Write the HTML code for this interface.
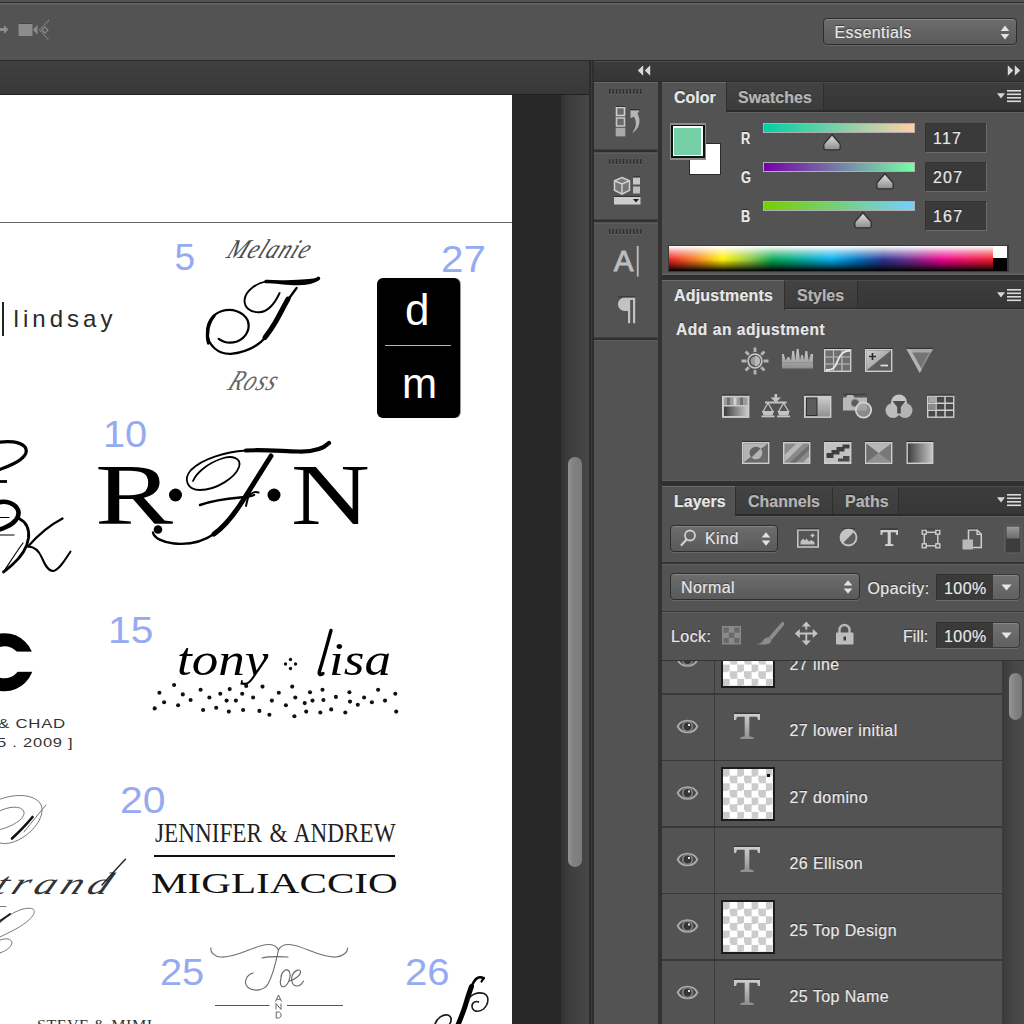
<!DOCTYPE html>
<html>
<head>
<meta charset="utf-8">
<title>Photoshop</title>
<style>
html,body{margin:0;padding:0;}
body{width:1024px;height:1024px;overflow:hidden;position:relative;background:#535353;font-family:"Liberation Sans",sans-serif;}
.a{position:absolute;}
.t{position:absolute;white-space:nowrap;line-height:1;font-size:16px;color:#e6e6e6;text-shadow:0 0 1px rgba(230,230,230,.55),0 -1px 1px rgba(0,0,0,.55);}
.t{letter-spacing:.42px;}
.tb{font-weight:bold;letter-spacing:0;}
.dim{color:#b4b4b4;text-shadow:0 0 1px rgba(180,180,180,.5),0 -1px 1px rgba(0,0,0,.5);}
.num{position:absolute;white-space:nowrap;line-height:1;color:#95aaf1;font-size:37px;}
.blk{position:absolute;white-space:nowrap;line-height:1;color:#000;}
svg{position:absolute;overflow:visible;}
</style>
</head>
<body>

<!-- ===== top options bar ===== -->
<div class="a" style="left:0;top:0;width:1024px;height:60px;background:#535353;"></div>
<div class="a" style="left:0;top:2px;width:1024px;height:1px;background:#2b2b2b;"></div>
<div class="a" style="left:0;top:3px;width:1024px;height:2px;background:#676767;"></div>
<div class="a" style="left:0;top:4px;width:1024px;height:1px;background:#5e5e5e;"></div>


<!-- options bar content -->
<svg style="left:0;top:18px" width="60" height="26" viewBox="0 18 60 26">
  <path d="M0 28 h4 v-3 l4.5 4.5 l-4.5 4.5 v-3 h-4z" fill="#8e8e8e"/>
  <rect x="18.5" y="23.5" width="14" height="12.5" fill="#8c8c8c"/>
  <rect x="18.5" y="23" width="14" height="1" fill="#444"/>
  <path d="M33 29.7 l4.5 -5 v10z" fill="#8c8c8c"/>
  <path d="M49 20 L39.5 30 L49 40" fill="none" stroke="#858585" stroke-width="1.4" stroke-dasharray="1.600 .900"/>
  <path d="M45 26.8 l3 3.2 l-3 3.2 l-3 -3.2z" fill="none" stroke="#8a8a8a" stroke-width="1.2"/>
</svg>
<div class="a" style="left:823px;top:18px;width:192px;height:25px;border:1px solid #2d2d2d;border-radius:4px;background:linear-gradient(#6d6d6d,#5a5a5a);box-shadow:0 1px 0 rgba(255,255,255,.12), inset 0 1px 0 rgba(255,255,255,.18);"></div>
<div class="t" style="left:834.500px;top:24.800px;">Essentials</div>
<svg style="left:1000px;top:25px" width="10" height="15" viewBox="0 0 10 15"><path d="M5 0.5 L9.3 6 H0.7z M5 14.5 L9.3 9 H0.7z" fill="#e2e2e2"/></svg>

<!-- ===== document tab strip ===== -->
<div class="a" style="left:0;top:60px;width:1024px;height:1px;background:#2a2a2a;"></div>
<div class="a" style="left:0;top:61px;width:590px;height:33px;background:linear-gradient(#404040,#383838);"></div>
<div class="a" style="left:0;top:94px;width:590px;height:1px;background:#222;"></div>

<!-- ===== canvas area ===== -->
<div class="a" style="left:0;top:95px;width:561px;height:929px;background:#282828;"></div>
<div class="a" id="doc" style="left:0;top:95px;width:512px;height:929px;background:#fff;overflow:hidden;"></div>

<!-- ===== document artwork (page coordinates) ===== -->
<div class="a" style="left:0;top:95px;width:512px;height:929px;overflow:hidden;">
<div class="a" style="left:0;top:-95px;width:512px;height:1024px;">
<div class="a" style="left:0;top:221.500px;width:512px;height:1.500px;background:#666;"></div>

<!-- numbers -->
<div class="num" id="n5" style="left:174.500px;top:239px;">5</div>
<div class="num" id="n27" style="left:441.300px;top:240.500px;transform:scaleX(1.090);transform-origin:0 0;">27</div>
<div class="num" id="n10" style="left:103.200px;top:415.500px;transform:scaleX(1.075);transform-origin:0 0;">10</div>
<div class="num" id="n15" style="left:107.800px;top:611.500px;transform:scaleX(1.100);transform-origin:0 0;">15</div>
<div class="num" id="n20" style="left:120px;top:781.500px;transform:scaleX(1.105);transform-origin:0 0;">20</div>
<div class="num" id="n25" style="left:160px;top:954px;transform:scaleX(1.075);transform-origin:0 0;">25</div>
<div class="num" id="n26" style="left:405px;top:953.500px;transform:scaleX(1.085);transform-origin:0 0;">26</div>

<!-- lindsay -->
<div class="a" style="left:1.800px;top:302px;width:2.600px;height:34px;background:#222;"></div>
<div class="blk" id="lindsay" style="left:13.500px;top:307px;font-size:24px;letter-spacing:4.050px;color:#2a2a2a;">lindsay</div>

<!-- Melanie / T / Ross -->
<div class="blk" id="melanie" style="left:222.500px;top:236px;font-family:'Liberation Serif',serif;font-style:italic;font-size:27px;color:#4c4c4c;transform:skewX(-24deg) scaleX(.860);transform-origin:0 100%;letter-spacing:1px;">Melanie</div>
<div class="blk" id="ross" style="left:223.500px;top:367px;font-family:'Liberation Serif',serif;font-style:italic;font-size:28.500px;color:#666;transform:skewX(-24deg) scaleX(.800);transform-origin:0 100%;letter-spacing:1.500px;">Ross</div>
<svg style="left:0;top:0" width="512" height="1024" viewBox="0 0 512 1024">
 <g fill="none" stroke="#000" stroke-linecap="round" stroke-linejoin="round">
  <!-- top bar -->
  <path d="M318.500 278.300 C312 283.500 300 284 290 283.300 C281 282.700 273 281.300 266 281.600" stroke-width="3.500"/>
  <path d="M318 279.300 C304 281.200 288 281.600 272 281.600" stroke-width="2.400"/>
  <path d="M267 281.400 C256 283 246 291 244.700 299 C243.500 307 250 312.500 259 312.300 C268 312 275 303 279.600 293" stroke-width="1.900"/>
  <!-- stem -->
  <path d="M296.600 288 C291 295 287 301 283 308.500 C278 318 273 327 266.500 336" stroke-width="2.400"/>
  <path d="M288 299 C284 306 280 314 275.500 322 C272 328 268.500 333 265 337.500" stroke-width="5"/>
  <path d="M266.500 336 C260 344.500 250 351.500 231 353.900 C218 354.500 208 345 207.100 333.400 C206.500 322 213 314 222 311 C232 308 243 311.500 247.500 320 C251 329 246 338 237 341.500 C230 343.800 223 342 218.700 338.800" stroke-width="2.200"/>
  <path d="M208.500 343 C206 334 208 323 214 316" stroke-width="3.300"/>
 </g>
</svg>

<!-- domino -->
<div class="a" style="left:377px;top:278px;width:83px;height:140px;border-radius:6px;background:#000;box-shadow:1px 0 0 #999;"></div>
<div class="a" style="left:385px;top:344.700px;width:66px;height:1px;background:#b4b4b4;"></div>
<div class="blk" id="dd" style="left:405px;top:287.500px;font-size:44px;color:#fff;">d</div>
<div class="blk" id="dm" style="left:402px;top:362.500px;font-size:42.500px;color:#fff;transform:scaleX(.990);transform-origin:0 0;">m</div>

<!-- R F N -->
<div class="blk" id="bigR" style="left:94.500px;top:451.500px;font-family:'Liberation Serif',serif;font-size:86px;transform:scaleX(1.360);transform-origin:0 0;">R</div>
<div class="blk" id="bigN" style="left:291px;top:451.500px;font-family:'Liberation Serif',serif;font-size:86px;transform:scaleX(1.270);transform-origin:0 0;">N</div>
<svg style="left:0;top:0" width="512" height="1024" viewBox="0 0 512 1024">
 <circle cx="175.500" cy="495" r="6.500" fill="#000"/><circle cx="274" cy="495" r="6.500" fill="#000"/>
 <g fill="none" stroke="#000" stroke-linecap="round" stroke-linejoin="round">
  <!-- F top bar -->
  <path d="M329 443 C322 450 312 452 298 451.500 C280 451 262 449.500 246 450.500" stroke-width="4.200"/>
  <path d="M246 450.500 C226 452 203 458 191 470 C183 479 187 490 200 490 C216 490 235 478 239 467 C242 458 232 455 222 458.500 C208 463 196 473 193 481" stroke-width="1.800"/>
  <!-- F stem -->
  <path d="M271 456 C262 470 251 488 240 505 C232 517 224 527 214 534" stroke-width="5"/>
  <path d="M214 534 C204 541 190 545 174 543.500 C163 542.500 154 538 153 532.500" stroke-width="2.400"/>
  <!-- crossbar -->
  <path d="M200 505 C213 500.500 228 498.500 240 497.500 C246 497 250 497 254 495" stroke-width="2.400"/>
  <path d="M250 491 C248.500 496 247 501 246 506 M248.500 496.500 C251 493 255 491 258.500 492.500" stroke-width="2"/>
 </g>
 <circle cx="158" cy="529.500" r="4.300" fill="#000"/>
</svg>

<!-- K script (left, cut off) -->
<svg style="left:0;top:0" width="512" height="1024" viewBox="0 0 512 1024">
 <g fill="none" stroke="#000" stroke-linecap="round" stroke-linejoin="round">
  <path d="M-2 442.500 C8 440.500 20 441.500 25 447 C29 453 23 459 14 463.500 C8 466.500 3 468.500 -2 470" stroke-width="3.200"/>
  <path d="M-2 481.500 H7" stroke-width="2.800" stroke-linecap="butt"/>
  <path d="M-2 502.500 C6 500.500 15 503 18 510 C20.500 517 14 523.500 6 527 C3 528.500 0 529.500 -2 530" stroke-width="4.600"/>
  <path d="M-2 517.500 H9 M-2 535 H14" stroke-width="1.200"/>
  <path d="M19 518.500 C26 522 29.500 529 28.500 538 C27 549 20 558 12 565 C8 568.500 5 571 3.500 572" stroke-width="2.800"/>
  <path d="M3.500 572 C10 562 17 551 23 543" stroke-width="1.200"/>
  <path d="M62.500 518.500 C50 525 38 535 28 546.500" stroke-width="2.300"/>
  <path d="M28 546.500 C35 546.500 39 551 42 558 C45 565 48 571 53 571 C59 570.500 65 560 70.500 551.500" stroke-width="2"/>
 </g>
</svg>

<!-- tony lisa -->
<div class="blk" id="tony" style="left:177px;top:635.500px;font-family:'Liberation Serif',serif;font-style:italic;font-size:47px;transform:scaleX(1.130);transform-origin:0 100%;">tony</div>
<div class="blk" id="lisa" style="left:328.500px;top:635.500px;font-family:'Liberation Serif',serif;font-style:italic;font-size:47px;transform:scaleX(1.130);transform-origin:0 100%;">isa</div>
<svg style="left:0;top:0" width="512" height="1024" viewBox="0 0 512 1024">
 <path d="M331 630.500 C327 645 323 660 319.500 671 C318.500 674.500 320 675.500 323 673.500" fill="none" stroke="#000" stroke-width="3.400" stroke-linecap="round"/>
 <g fill="#111"><circle cx="290.500" cy="659.500" r="1.700"/><circle cx="290.500" cy="668.500" r="1.700"/><circle cx="285.500" cy="664" r="1.700"/><circle cx="295.500" cy="664" r="1.700"/></g>
 <g fill="#111"><circle cx="159.4" cy="692.8" r="2.050"/><circle cx="174.1" cy="685.0" r="2.050"/><circle cx="164.1" cy="702.2" r="2.050"/><circle cx="154.7" cy="708.4" r="2.050"/><circle cx="182.8" cy="694.4" r="2.050"/><circle cx="178.1" cy="705.3" r="2.050"/><circle cx="190.6" cy="700.0" r="2.050"/><circle cx="200.6" cy="689.7" r="2.050"/><circle cx="209.4" cy="697.5" r="2.050"/><circle cx="203.1" cy="710.0" r="2.050"/><circle cx="216.2" cy="707.8" r="2.050"/><circle cx="220.3" cy="693.8" r="2.050"/><circle cx="226.6" cy="700.6" r="2.050"/><circle cx="229.7" cy="689.1" r="2.050"/><circle cx="235.9" cy="700.6" r="2.050"/><circle cx="228.8" cy="711.6" r="2.050"/><circle cx="242.2" cy="693.8" r="2.050"/><circle cx="243.1" cy="710.0" r="2.050"/><circle cx="246.2" cy="685.9" r="2.050"/><circle cx="253.1" cy="697.5" r="2.050"/><circle cx="259.4" cy="710.9" r="2.050"/><circle cx="262.5" cy="686.6" r="2.050"/><circle cx="269.4" cy="714.7" r="2.050"/><circle cx="271.9" cy="700.6" r="2.050"/><circle cx="278.8" cy="692.8" r="2.050"/><circle cx="285.9" cy="705.3" r="2.050"/><circle cx="292.2" cy="686.6" r="2.050"/><circle cx="295.3" cy="697.5" r="2.050"/><circle cx="294.4" cy="716.2" r="2.050"/><circle cx="304.7" cy="703.1" r="2.050"/><circle cx="306.2" cy="711.6" r="2.050"/><circle cx="310.0" cy="692.2" r="2.050"/><circle cx="312.5" cy="700.6" r="2.050"/><circle cx="320.3" cy="712.5" r="2.050"/><circle cx="322.5" cy="689.7" r="2.050"/><circle cx="323.4" cy="700.0" r="2.050"/><circle cx="331.2" cy="709.4" r="2.050"/><circle cx="335.9" cy="696.9" r="2.050"/><circle cx="345.3" cy="712.5" r="2.050"/><circle cx="349.4" cy="692.2" r="2.050"/><circle cx="350.0" cy="701.6" r="2.050"/><circle cx="357.8" cy="704.7" r="2.050"/><circle cx="364.1" cy="697.5" r="2.050"/><circle cx="371.9" cy="702.2" r="2.050"/><circle cx="378.1" cy="689.7" r="2.050"/><circle cx="385.0" cy="700.6" r="2.050"/><circle cx="395.3" cy="693.8" r="2.050"/><circle cx="396.2" cy="711.6" r="2.050"/></g>
</svg>

<!-- big C + CHAD -->
<svg style="left:0;top:0" width="512" height="1024" viewBox="0 0 512 1024">
 <ellipse cx="4.500" cy="662.300" rx="22.800" ry="22.500" fill="none" stroke="#000" stroke-width="13"/><rect x="12" y="651.600" width="26" height="20.200" fill="#fff"/>
</svg>
<div class="blk" id="chad" style="left:-2px;top:717px;font-size:13px;color:#333;letter-spacing:.600px;transform:scaleX(1.290);transform-origin:0 0;">&amp; CHAD</div>
<div class="blk" id="d2009" style="left:-3px;top:736px;font-size:13px;color:#333;letter-spacing:.600px;transform:scaleX(1.270);transform-origin:0 0;">5 . 2009 ]</div>

<!-- Jennifer & Andrew -->
<div class="blk" id="jen" style="left:154.500px;top:819.500px;font-family:'Liberation Serif',serif;font-size:27px;color:#222;word-spacing:2px;transform:scaleX(.859);transform-origin:0 0;">JENNIFER &amp; ANDREW</div>
<div class="a" style="left:154px;top:855.200px;width:240.500px;height:1.700px;background:#111;"></div>
<div class="blk" id="mig" style="left:151px;top:867.500px;font-family:'Liberation Serif',serif;font-size:29.800px;color:#111;transform:scaleX(1.380);transform-origin:0 0;">MIGLIACCIO</div>

<!-- left script D / trand / flourish -->
<div class="blk" id="trand" style="left:-10px;top:868px;font-family:'Liberation Serif',serif;font-style:italic;font-size:31px;color:#333;letter-spacing:4px;transform:skewX(-25deg) scaleX(1.370);transform-origin:0 100%;">trand</div>
<svg style="left:0;top:0" width="512" height="1024" viewBox="0 0 512 1024">
 <g fill="none" stroke="#777" stroke-width="1" stroke-linecap="round">
  <path d="M-2 800 C12 794 32 793 40 803 C46 812 38 828 22 838 C12 844 2 845 -2 842"/>
  <path d="M-2 812 C8 806 22 805 24 812 C25 819 12 827 -2 830"/>
  <path d="M46 805 C40 812 32 822 24 832"/>
  <path d="M-2 925 C10 912 26 906 33 909 C38 913 28 923 12 931 C6 934 2 936 -2 938"/>
  <path d="M-2 941 C6 937 12 939 12 943 C11 948 4 952 -2 953.500"/>
  <path d="M-2 906.500 H6"/>
 </g>
 <path d="M32.500 817 C26 825 19 832 12 838.500" fill="none" stroke="#111" stroke-width="2.600" stroke-linecap="round"/>
 <path d="M10 914 C6 917 3 919 0 921" fill="none" stroke="#222" stroke-width="2" stroke-linecap="round"/>
 <path d="M125.500 859.300 C118 867 110 876 102 885" fill="none" stroke="#222" stroke-width="1.400" stroke-linecap="round"/>
</svg>

<!-- Joe -->
<svg style="left:0;top:0" width="512" height="1024" viewBox="0 0 512 1024">
 <g fill="none" stroke="#7a6f6a" stroke-width="1.200" stroke-linecap="round">
  <path d="M211 948 C210 952 214 956.500 221 957 C238 958 254 945 268 944.500 C274 944.300 277 947 278.500 950 C280 947 283 944.300 289 944.500 C303 945 319 958 336 957 C343 956.500 348 952 347.500 948"/>
 </g>
 <g fill="none" stroke="#666" stroke-width="1.100" stroke-linecap="round">
  <path d="M262 958 C268 956.500 280 956.500 288 957"/>
  <path d="M278.500 950 C276 962 273 975 268 984 C264 990.500 254 992 248 987.500 C243 983 246 975 253 973"/>
  <path d="M281 978 C281 972 286 968 289 971 C291.500 975 289 984 284.500 986.500 C280.500 988 279.500 983 281 978"/>
  <path d="M289.500 981 C295 979.500 301 975 300.500 971.500 C300 968.500 294 970 292 976 C290.500 982 293 986.500 297.500 986 C300.500 985.500 302.500 983 303.500 981"/>
 </g>
 <path d="M215 1005.500 H269.500 M287 1005.500 H343" stroke="#555" stroke-width="1.100"/>
 <g fill="none" stroke="#555" stroke-width="0.900">
  <path d="M275.500 1001.500 L278.500 995 L281.500 1001.500 M276.700 999.300 H280.300"/>
  <path d="M276 1009.500 V1003.500 L281 1009.500 V1003.500"/>
  <path d="M276.200 1018 V1012 H278.500 C282 1012 282 1018 278.500 1018z"/>
 </g>
</svg>

<!-- script f bottom right -->
<svg style="left:0;top:0" width="512" height="1024" viewBox="0 0 512 1024">
 <g fill="none" stroke="#000" stroke-linecap="round" stroke-linejoin="round">
  <path d="M483.500 978.500 C481.500 976.800 478 976.800 475.500 979.500 C473 982.500 471.500 986 470 990" stroke-width="2.600"/>
  <path d="M471.500 986.500 C469 993 467 1000 464.500 1008 C462.500 1014 460 1020 457.500 1026" stroke-width="5"/>
  <path d="M483.800 977.800 L481.500 981.500" stroke-width="2.200"/>
  <path d="M468.500 1000 C470 994.500 478 991.500 484 993.500 C489.500 996 489 1004 483.500 1009 C478.500 1013 472.500 1011.500 472 1006.500 C471.800 1002.500 476 1000.500 478.500 1002" stroke-width="1.600" stroke="#1a1a1a"/>
  <path d="M435 1024 C437 1018 443 1014 448 1015 C452 1016.500 452 1021 449 1025" stroke-width="1.700" stroke="#1a1a1a"/>
 </g>
</svg>

<!-- STEVE & MIMI (cut off) -->
<div class="blk" id="steve" style="left:37px;top:1018.500px;font-family:'Liberation Serif',serif;font-size:14px;color:#333;letter-spacing:.400px;transform:scaleX(1.150);transform-origin:0 0;">STEVE &amp; MIMI</div>

</div></div>
<!-- scrollbar -->
<div class="a" style="left:561px;top:95px;width:28px;height:929px;background:linear-gradient(90deg,#333,#3d3d3d 30%,#484848);"></div>
<div class="a" style="left:568px;top:457px;width:14px;height:410px;border-radius:7px;background:linear-gradient(90deg,#939393,#828282 35%,#7b7b7b);"></div>

<!-- ===== panel dock separators ===== -->
<div class="a" style="left:589px;top:61px;width:5px;height:963px;background:#3a3a3a;"></div>
<div class="a" style="left:589px;top:61px;width:2px;height:963px;background:#2c2c2c;"></div>
<div class="a" style="left:592px;top:61px;width:2px;height:963px;background:#2e2e2e;"></div>

<!-- dock header -->
<div class="a" style="left:594px;top:61px;width:430px;height:21px;background:linear-gradient(#3c3c3c,#353535);"></div>
<div class="a" style="left:594px;top:61px;width:430px;height:1px;background:#4a4a4a;"></div>
<div class="a" style="left:594px;top:80.500px;width:430px;height:1.500px;background:#2a2a2a;"></div>

<!-- dock header arrows -->
<svg style="left:637px;top:64.500px" width="14" height="11" viewBox="0 0 14 11"><path d="M6.200 0.300 V10.700 L0.800 5.500z M13.200 0.300 V10.700 L7.800 5.500z" fill="#dadada"/></svg>
<svg style="left:1007px;top:64.500px" width="14" height="11" viewBox="0 0 14 11"><path d="M0.800 0.300 V10.700 L6.200 5.500z M7.800 0.300 V10.700 L13.200 5.500z" fill="#dadada"/></svg>

<!-- icon strip -->
<div class="a" id="strip" style="left:594px;top:82px;width:63.500px;height:942px;background:#535353;"></div>
<div class="a" style="left:657.500px;top:82px;width:4.500px;height:942px;background:#323232;"></div>


<!-- icon strip contents -->
<svg style="left:0;top:0" width="1024" height="1024" viewBox="0 0 1024 1024">
  <!-- panel borders -->
  <rect x="594" y="82" width="63.5" height="1" fill="#6a6a6a"/>
  <rect x="594" y="149.5" width="63.5" height="3" fill="#2f2f2f"/>
  <rect x="594" y="152.5" width="63.5" height="1" fill="#676767"/>
  <rect x="594" y="219.5" width="63.5" height="3" fill="#2f2f2f"/>
  <rect x="594" y="222.5" width="63.5" height="1" fill="#676767"/>
  <rect x="594" y="337.5" width="63.5" height="2.5" fill="#2f2f2f"/>
  <rect x="594" y="340" width="63.5" height="1" fill="#5e5e5e"/>
  <rect x="609.00" y="89" width="1.3" height="5" fill="#2e2e2e"/><rect x="612.45" y="89" width="1.3" height="5" fill="#2e2e2e"/><rect x="615.90" y="89" width="1.3" height="5" fill="#2e2e2e"/><rect x="619.35" y="89" width="1.3" height="5" fill="#2e2e2e"/><rect x="622.80" y="89" width="1.3" height="5" fill="#2e2e2e"/><rect x="626.25" y="89" width="1.3" height="5" fill="#2e2e2e"/><rect x="629.70" y="89" width="1.3" height="5" fill="#2e2e2e"/><rect x="633.15" y="89" width="1.3" height="5" fill="#2e2e2e"/><rect x="636.60" y="89" width="1.3" height="5" fill="#2e2e2e"/><rect x="640.05" y="89" width="1.3" height="5" fill="#2e2e2e"/><rect x="609.00" y="94" width="1.3" height="1" fill="#6a6a6a"/><rect x="612.45" y="94" width="1.3" height="1" fill="#6a6a6a"/><rect x="615.90" y="94" width="1.3" height="1" fill="#6a6a6a"/><rect x="619.35" y="94" width="1.3" height="1" fill="#6a6a6a"/><rect x="622.80" y="94" width="1.3" height="1" fill="#6a6a6a"/><rect x="626.25" y="94" width="1.3" height="1" fill="#6a6a6a"/><rect x="629.70" y="94" width="1.3" height="1" fill="#6a6a6a"/><rect x="633.15" y="94" width="1.3" height="1" fill="#6a6a6a"/><rect x="636.60" y="94" width="1.3" height="1" fill="#6a6a6a"/><rect x="640.05" y="94" width="1.3" height="1" fill="#6a6a6a"/><rect x="609.00" y="159" width="1.3" height="5" fill="#2e2e2e"/><rect x="612.45" y="159" width="1.3" height="5" fill="#2e2e2e"/><rect x="615.90" y="159" width="1.3" height="5" fill="#2e2e2e"/><rect x="619.35" y="159" width="1.3" height="5" fill="#2e2e2e"/><rect x="622.80" y="159" width="1.3" height="5" fill="#2e2e2e"/><rect x="626.25" y="159" width="1.3" height="5" fill="#2e2e2e"/><rect x="629.70" y="159" width="1.3" height="5" fill="#2e2e2e"/><rect x="633.15" y="159" width="1.3" height="5" fill="#2e2e2e"/><rect x="636.60" y="159" width="1.3" height="5" fill="#2e2e2e"/><rect x="640.05" y="159" width="1.3" height="5" fill="#2e2e2e"/><rect x="609.00" y="164" width="1.3" height="1" fill="#6a6a6a"/><rect x="612.45" y="164" width="1.3" height="1" fill="#6a6a6a"/><rect x="615.90" y="164" width="1.3" height="1" fill="#6a6a6a"/><rect x="619.35" y="164" width="1.3" height="1" fill="#6a6a6a"/><rect x="622.80" y="164" width="1.3" height="1" fill="#6a6a6a"/><rect x="626.25" y="164" width="1.3" height="1" fill="#6a6a6a"/><rect x="629.70" y="164" width="1.3" height="1" fill="#6a6a6a"/><rect x="633.15" y="164" width="1.3" height="1" fill="#6a6a6a"/><rect x="636.60" y="164" width="1.3" height="1" fill="#6a6a6a"/><rect x="640.05" y="164" width="1.3" height="1" fill="#6a6a6a"/><rect x="609.00" y="229" width="1.3" height="5" fill="#2e2e2e"/><rect x="612.45" y="229" width="1.3" height="5" fill="#2e2e2e"/><rect x="615.90" y="229" width="1.3" height="5" fill="#2e2e2e"/><rect x="619.35" y="229" width="1.3" height="5" fill="#2e2e2e"/><rect x="622.80" y="229" width="1.3" height="5" fill="#2e2e2e"/><rect x="626.25" y="229" width="1.3" height="5" fill="#2e2e2e"/><rect x="629.70" y="229" width="1.3" height="5" fill="#2e2e2e"/><rect x="633.15" y="229" width="1.3" height="5" fill="#2e2e2e"/><rect x="636.60" y="229" width="1.3" height="5" fill="#2e2e2e"/><rect x="640.05" y="229" width="1.3" height="5" fill="#2e2e2e"/><rect x="609.00" y="234" width="1.3" height="1" fill="#6a6a6a"/><rect x="612.45" y="234" width="1.3" height="1" fill="#6a6a6a"/><rect x="615.90" y="234" width="1.3" height="1" fill="#6a6a6a"/><rect x="619.35" y="234" width="1.3" height="1" fill="#6a6a6a"/><rect x="622.80" y="234" width="1.3" height="1" fill="#6a6a6a"/><rect x="626.25" y="234" width="1.3" height="1" fill="#6a6a6a"/><rect x="629.70" y="234" width="1.3" height="1" fill="#6a6a6a"/><rect x="633.15" y="234" width="1.3" height="1" fill="#6a6a6a"/><rect x="636.60" y="234" width="1.3" height="1" fill="#6a6a6a"/><rect x="640.05" y="234" width="1.3" height="1" fill="#6a6a6a"/>
  <!-- history icon -->
  <g>
    <rect x="616.5" y="107.5" width="8" height="8" fill="#6a6a6a" stroke="#d0d0d0" stroke-width="1.6"/>
    <rect x="616.5" y="118" width="8" height="8" fill="#6a6a6a" stroke="#c4c4c4" stroke-width="1.6"/>
    <rect x="615.7" y="127.8" width="9.6" height="8.6" fill="#a8a8a8"/>
    <rect x="615.7" y="106" width="9.6" height="1" fill="#333"/>
    <path d="M630.5 110.5 h9 l-2 3.2 c4 7 2 15 -5.5 19.5 c4.5 -6 5 -11 2 -16.5 l-3.5 1.6z" fill="#b4b4b4"/>
    <rect x="630" y="109" width="10" height="1" fill="#333"/>
  </g>
  <!-- 3d/properties icon -->
  <g>
    <path d="M622 177.5 l7.5 3.2 v9.5 l-7.5 4 l-7.5 -4 v-9.5z" fill="#777" stroke="#cfcfcf" stroke-width="1.5"/>
    <path d="M614.5 180.7 l7.5 3.3 l7.5 -3.3 M622 184 v10" fill="none" stroke="#cfcfcf" stroke-width="1.5"/>
    <rect x="633" y="177.5" width="7" height="7" fill="#c6c6c6"/>
    <rect x="633" y="186.5" width="7" height="7" fill="#bdbdbd"/>
    <rect x="633" y="176.3" width="7" height="1" fill="#333"/>
    <rect x="614" y="197" width="26.5" height="7.5" fill="#cdcdcd"/>
    <rect x="614" y="196" width="26.5" height="1" fill="#333"/>
    <path d="M633 199 h6 l-3 3.6z" fill="#222"/>
  </g>
  <!-- character icon A| -->
  <g>
    <text x="613.8" y="271" font-family="Liberation Sans" font-size="29.5" fill="#bdbdbd" stroke="#bdbdbd" stroke-width="0.9">A</text>
    <rect x="614" y="248.6" width="22" height="1" fill="#3c3c3c" opacity="0"/>
    <rect x="636.8" y="246" width="1.8" height="30.5" fill="#bdbdbd"/>
  </g>
  <!-- paragraph icon -->
  <g>
    <path d="M622.7 297.5 h12.5 v25.8 h-2.2 v-23.3 h-2.8 v23.3 h-2.2 v-12.3 h-3.3 a6.75 6.75 0 0 1 0 -13.5z" fill="#c2c2c2"/><rect x="618" y="296.3" width="17.2" height="1" fill="#333"/>
  </g>
</svg>
<!-- ===== COLOR panel ===== -->
<div class="a" id="colorp" style="left:662px;top:82px;width:362px;height:193px;background:#535353;"></div>

<!-- color panel contents -->
<div class="a" style="left:662px;top:82px;width:362px;height:29px;background:linear-gradient(#3d3d3d,#363636);"></div>
<div class="a" style="left:727px;top:82px;width:96px;height:28px;background:linear-gradient(#434343,#3c3c3c);border-right:1px solid #2e2e2e;"></div>
<div class="a" style="left:662px;top:82px;width:362px;height:1px;background:#4a4a4a;"></div>
<div class="a" style="left:727px;top:110px;width:297px;height:1.5px;background:#2b2b2b;"></div>
<div class="a" style="left:727px;top:111.5px;width:297px;height:1px;background:#606060;"></div>
<div class="a" style="left:662px;top:82px;width:65px;height:30px;background:#535353;border-top:1px solid #6c6c6c;border-right:1px solid #2e2e2e;box-sizing:border-box;"></div>
<div class="t tb" style="left:674px;top:90px;">Color</div>
<div class="t tb dim" style="left:738px;top:90px;">Swatches</div>
<svg style="left:996px;top:90px" width="26" height="14" viewBox="0 0 26 14"><path d="M1 3.200 h8 l-4 5.400z" fill="#d8d8d8"/><rect x="11" y="0" width="14" height="1.6" fill="#dcdcdc"/><rect x="11" y="3.5" width="14" height="1.6" fill="#dcdcdc"/><rect x="11" y="7" width="14" height="1.6" fill="#dcdcdc"/><rect x="11" y="10.5" width="14" height="1.6" fill="#dcdcdc"/></svg>
<!-- swatches -->
<div class="a" style="left:689px;top:142.5px;width:32px;height:32px;background:#fff;border:1px solid #2a2a2a;box-sizing:border-box;"></div>
<div class="a" style="left:669.5px;top:123px;width:36.5px;height:36.5px;background:#8c8c8c;"></div>
<div class="a" style="left:671px;top:124.5px;width:33.5px;height:33.5px;background:#111;"></div>
<div class="a" style="left:672.8px;top:126.3px;width:30px;height:30px;background:#fff;"></div>
<div class="a" style="left:674.3px;top:127.8px;width:27px;height:27px;background:#75cfa7;"></div>
<!-- sliders -->
<div class="t tb" style="left:740.5px;top:131px;font-size:16px;transform:scaleX(.8);transform-origin:0 0;">R</div>
<div class="t tb" style="left:740.5px;top:170px;font-size:16px;transform:scaleX(.8);transform-origin:0 0;">G</div>
<div class="t tb" style="left:740.5px;top:209px;font-size:16px;transform:scaleX(.8);transform-origin:0 0;">B</div>
<div class="a" style="left:763px;top:123px;width:152px;height:10px;background:#b0b0b0;"></div>
<div class="a" style="left:764px;top:124px;width:150px;height:8px;background:linear-gradient(90deg,#00cfa7,#ffcfa7);"></div>
<div class="a" style="left:763px;top:162px;width:152px;height:10px;background:#b0b0b0;"></div>
<div class="a" style="left:764px;top:163px;width:150px;height:8px;background:linear-gradient(90deg,#7500a7,#75ffa7);"></div>
<div class="a" style="left:763px;top:201px;width:152px;height:10px;background:#b0b0b0;"></div>
<div class="a" style="left:764px;top:202px;width:150px;height:8px;background:linear-gradient(90deg,#75cf00,#75cfff);"></div>
<svg style="left:822px;top:134px" width="20" height="18" viewBox="0 0 20 18"><defs><linearGradient id="tg832" x1="0" y1="0" x2="0" y2="1"><stop offset="0" stop-color="#e4e4e4"/><stop offset="0.55" stop-color="#b4b4b4"/><stop offset="1" stop-color="#8c8c8c"/></linearGradient></defs><path d="M10 0.8 L17.6 9.2 Q18.2 10 18.2 11 V14 Q18.2 15.8 16.4 15.8 H3.6 Q1.8 15.8 1.8 14 V11 Q1.8 10 2.4 9.2z" fill="url(#tg832)" stroke="#303030" stroke-width="1.3"/></svg><svg style="left:875px;top:173px" width="20" height="18" viewBox="0 0 20 18"><defs><linearGradient id="tg885" x1="0" y1="0" x2="0" y2="1"><stop offset="0" stop-color="#e4e4e4"/><stop offset="0.55" stop-color="#b4b4b4"/><stop offset="1" stop-color="#8c8c8c"/></linearGradient></defs><path d="M10 0.8 L17.6 9.2 Q18.2 10 18.2 11 V14 Q18.2 15.8 16.4 15.8 H3.6 Q1.8 15.8 1.8 14 V11 Q1.8 10 2.4 9.2z" fill="url(#tg885)" stroke="#303030" stroke-width="1.3"/></svg><svg style="left:853px;top:212px" width="20" height="18" viewBox="0 0 20 18"><defs><linearGradient id="tg863" x1="0" y1="0" x2="0" y2="1"><stop offset="0" stop-color="#e4e4e4"/><stop offset="0.55" stop-color="#b4b4b4"/><stop offset="1" stop-color="#8c8c8c"/></linearGradient></defs><path d="M10 0.8 L17.6 9.2 Q18.2 10 18.2 11 V14 Q18.2 15.8 16.4 15.8 H3.6 Q1.8 15.8 1.8 14 V11 Q1.8 10 2.4 9.2z" fill="url(#tg863)" stroke="#303030" stroke-width="1.3"/></svg><div class="a" style="left:925px;top:123px;width:61px;height:29px;background:#3a3a3a;box-shadow:1px 1px 0 #6b6b6b, inset 1px 1px 0 #333;"></div><div class="t" style="left:933px;top:131px;letter-spacing:1.200px;">117</div><div class="a" style="left:925px;top:162px;width:61px;height:29px;background:#3a3a3a;box-shadow:1px 1px 0 #6b6b6b, inset 1px 1px 0 #333;"></div><div class="t" style="left:933px;top:170px;letter-spacing:1.200px;">207</div><div class="a" style="left:925px;top:201px;width:61px;height:29px;background:#3a3a3a;box-shadow:1px 1px 0 #6b6b6b, inset 1px 1px 0 #333;"></div><div class="t" style="left:933px;top:209px;letter-spacing:1.200px;">167</div>
<!-- spectrum -->
<div class="a" style="left:667.5px;top:245px;width:341px;height:27px;background:#3a3a3a;"></div>
<div class="a" style="left:668.5px;top:246px;width:325px;height:25px;background:linear-gradient(90deg,#ee1c24 0%,#f47920 8%,#fff200 16.500%,#8dc63f 25%,#00a651 32%,#00a99d 41%,#00aeef 50%,#0072bc 58%,#2e3192 66%,#662d91 73%,#ec008c 84%,#ed145b 92%,#ee1c24 100%);"></div>
<div class="a" style="left:668.5px;top:246px;width:325px;height:25px;background:linear-gradient(180deg,rgba(255,255,255,1) 0%,rgba(255,255,255,.45) 28%,rgba(255,255,255,0) 55%,rgba(0,0,0,0) 55%,rgba(0,0,0,.5) 80%,rgba(0,0,0,1) 100%);"></div>
<div class="a" style="left:993px;top:246px;width:14px;height:12px;background:#fff;"></div>
<div class="a" style="left:993px;top:258px;width:14px;height:13px;background:#000;"></div>
<!-- panel bottom -->
<div class="a" style="left:662px;top:273px;width:362px;height:2px;background:#5f5f5f;"></div>
<div class="a" style="left:662px;top:275px;width:362px;height:5px;background:#303030;"></div>
<!-- ===== ADJUSTMENTS panel ===== -->
<div class="a" id="adjp" style="left:662px;top:280px;width:362px;height:201px;background:#535353;"></div>

<!-- adjustments contents -->
<div class="a" style="left:662px;top:280px;width:362px;height:29px;background:linear-gradient(#3d3d3d,#363636);"></div>
<div class="a" style="left:785px;top:280px;width:72px;height:28px;background:linear-gradient(#434343,#3c3c3c);border-right:1px solid #2e2e2e;"></div>
<div class="a" style="left:662px;top:280px;width:362px;height:1px;background:#4a4a4a;"></div>
<div class="a" style="left:785px;top:307.5px;width:239px;height:1.5px;background:#2b2b2b;"></div>
<div class="a" style="left:785px;top:309px;width:239px;height:1px;background:#606060;"></div>
<div class="a" style="left:662px;top:280px;width:123px;height:30px;background:#535353;border-top:1px solid #6c6c6c;border-right:1px solid #2e2e2e;box-sizing:border-box;"></div>
<div class="t tb" style="left:674px;top:288px;letter-spacing:.2px;">Adjustments</div>
<div class="t tb dim" style="left:797px;top:288px;">Styles</div>
<svg style="left:996px;top:289px" width="26" height="14" viewBox="0 0 26 14"><path d="M1 3.200 h8 l-4 5.400z" fill="#d8d8d8"/><rect x="11" y="0" width="14" height="1.6" fill="#dcdcdc"/><rect x="11" y="3.5" width="14" height="1.6" fill="#dcdcdc"/><rect x="11" y="7" width="14" height="1.6" fill="#dcdcdc"/><rect x="11" y="10.5" width="14" height="1.6" fill="#dcdcdc"/></svg>
<div class="t tb" style="left:676px;top:322px;font-size:15.6px;letter-spacing:.520px;">Add an adjustment</div>
<svg id="adjicons" style="left:0;top:0" width="1024" height="1024" viewBox="0 0 1024 1024">
<defs>
<linearGradient id="gv" x1="0" y1="0" x2="0" y2="1"><stop offset="0" stop-color="#cfcfcf"/><stop offset="1" stop-color="#8e8e8e"/></linearGradient>
<linearGradient id="gh" x1="0" y1="0" x2="1" y2="0"><stop offset="0" stop-color="#3c3c3c"/><stop offset="1" stop-color="#c8c8c8"/></linearGradient>
<linearGradient id="gd" x1="0" y1="0" x2="1" y2="1"><stop offset="0" stop-color="#d0d0d0"/><stop offset="1" stop-color="#8a8a8a"/></linearGradient>
</defs>
<!-- ROW 1 -->
<!-- brightness -->
<g stroke="#b4b4b4" stroke-width="2.800" fill="none">
 <path d="M755 347.500 v4.500 M755 370 v4.500 M741.500 361 h5 M763.500 361 h5 M745.600 351.600 l3.200 3.200 M761.200 367.200 l3.200 3.200 M764.400 351.600 l-3.200 3.200 M748.800 367.200 l-3.200 3.200"/>
</g>
<circle cx="755" cy="361" r="7" fill="#a2a2a2" stroke="#c8c8c8" stroke-width="1.400"/>
<circle cx="755" cy="361" r="5.200" fill="#9a9a9a" stroke="#4c4c4c" stroke-width="1.500"/>
<path d="M755 355.800 a5.200 5.200 0 0 1 0 10.400z" fill="#b8b8b8"/>
<!-- levels -->
<path d="M782 368.500 V354 L783.800 354 L785.500 360.500 L787.700 357 L789.300 357 L791 361 L792.300 351 L794 351 L795.500 360.500 L796.800 349 L798.500 349 L800 360.500 L801.300 355 L802.800 355 L804 360.500 L805.500 351 L807.200 351 L808.700 361 L810.800 354 L813 354 V368.500 Z" fill="url(#gv)"/>
<rect x="782" y="362.300" width="31" height="0.800" fill="#8e8e8e"/>
<!-- curves -->
<rect x="824.7" y="349.7" width="26" height="21.6" fill="#6e6e6e" stroke="#cdcdcd" stroke-width="1.4"/>
<rect x="824" y="348" width="27.4" height="1" fill="#2f2f2f"/>
<path d="M833.5 350 v21 M842 350 v21 M825 357 h26 M825 364 h26" stroke="#bdbdbd" stroke-width="1.2" fill="none"/>
<path d="M826 370 c10 0 10 -6 12 -10 s4 -9.5 12.5 -9.5" stroke="#e6e6e6" stroke-width="1.8" fill="none"/>
<!-- exposure -->
<rect x="865.700" y="349.700" width="26" height="21.600" fill="#5c5c5c" stroke="#cdcdcd" stroke-width="1.400"/>
<rect x="865" y="348" width="27.400" height="1" fill="#2f2f2f"/>
<path d="M866.400 370.600 v-20.200 h24.600z" fill="url(#gd)"/>
<path d="M869 356.500 h7 M872.500 353 v7" stroke="#2e2e2e" stroke-width="1.700"/>
<path d="M880.500 365.500 h7.500" stroke="#e4e4e4" stroke-width="1.700"/>
<!-- vibrance -->
<path d="M906.5 349 h26.5 l-13.25 24z" fill="#8c8c8c"/>
<path d="M909.5 350.8 h20.5 l-10.25 18.6z" fill="#747474"/>
<path d="M906.5 349 h26.5 l-2 3.5 h-22.5z" fill="#a8a8a8"/>
<path d="M906.5 349 l13.25 24 l2 -3.6 l-11.4 -20.4z" fill="#b4b4b4"/>
<rect x="906.5" y="347.8" width="26.5" height="1" fill="#2f2f2f"/>
<!-- ROW 2 -->
<!-- hue/sat -->
<rect x="722.7" y="396.2" width="26" height="21" fill="#c8c8c8" stroke="#cdcdcd" stroke-width="1.4"/>
<rect x="722" y="394.5" width="27.4" height="1" fill="#2f2f2f"/>
<rect x="724" y="397.5" width="23.4" height="7.5" fill="#9a9a9a"/>
<rect x="727" y="397.5" width="3" height="7.5" fill="#6e6e6e"/><rect x="733.5" y="397.5" width="3" height="7.5" fill="#d2d2d2"/><rect x="740" y="397.5" width="3" height="7.5" fill="#6e6e6e"/>
<rect x="724" y="406.5" width="23.4" height="9.5" fill="url(#gh)"/>
<!-- color balance -->
<g fill="#c4c4c4" stroke="none">
 <rect x="774.5" y="394" width="2.6" height="6"/>
 <path d="M770.5 397.5 h10.6 l-5.3 5z"/>
 <rect x="765" y="401.5" width="21.6" height="2"/>
 <path d="M762 411 h12 l-1.5 4.5 h-9z"/><path d="M777.6 411 h12 l-1.500 4.500 h-9z"/>
 <rect x="761.500" y="415.500" width="13" height="1.800"/><rect x="777.100" y="415.500" width="13" height="1.800"/>
</g>
<path d="M768 403 l-5 8.500 M768 403 l5 8.500 M783.600 403 l-5 8.500 M783.600 403 l5 8.500" stroke="#c4c4c4" stroke-width="1.300" fill="none"/>
<!-- b&w -->
<rect x="804.700" y="396.200" width="26" height="21" fill="url(#gv)" stroke="#cdcdcd" stroke-width="1.400"/>
<rect x="804" y="394.500" width="27.400" height="1" fill="#2f2f2f"/>
<rect x="806.500" y="398" width="10.500" height="17.500" fill="#5c5c5c" stroke="#2e2e2e" stroke-width="1"/>
<!-- photo filter -->
<path d="M843 397.500 h3 l1.500 -2.500 h5.500 l1.500 2.500 h12.500 v13 h-24z" fill="#b8b8b8"/>
<rect x="843" y="393.800" width="24" height="1" fill="#2f2f2f" opacity=".7"/>
<circle cx="855" cy="403" r="3.800" fill="#5a5a5a" stroke="#8a8a8a" stroke-width="1"/>
<circle cx="863.500" cy="410" r="7.700" fill="#9c9c9c" fill-opacity=".75" stroke="#d2d2d2" stroke-width="1.800"/>
<!-- channel mixer -->
<circle cx="899" cy="402.500" r="8" fill="#c6c6c6"/>
<circle cx="893" cy="410.500" r="7.500" fill="#bcbcbc"/>
<circle cx="905" cy="410.500" r="7.500" fill="#b4b4b4"/>
<path d="M892.500 401 h13 l-4.700 6 v6.500 h-3.600 v-6.500z" fill="#4a4a4a"/>
<!-- color lookup -->
<rect x="927.700" y="396.200" width="26" height="21" fill="#484848" stroke="#cdcdcd" stroke-width="1.400"/>
<rect x="927" y="394.500" width="27.400" height="1" fill="#2f2f2f"/>
<path d="M936 396.500 v20.500 M945 396.500 v20.500 M928 403.200 h25.500 M928 410.200 h25.500" stroke="#cdcdcd" stroke-width="1.500" fill="none"/>
<rect x="928.500" y="397" width="7" height="5.500" fill="#a8a8a8"/><rect x="928.500" y="404" width="7" height="5.500" fill="#8a8a8a"/>
<!-- ROW 3 -->
<!-- invert -->
<rect x="742.700" y="442.700" width="26" height="20.600" fill="#6a6a6a" stroke="#cdcdcd" stroke-width="1.400"/>
<rect x="742" y="441" width="27.400" height="1" fill="#2f2f2f"/>
<path d="M743.400 462.600 v-19.200 h24.600z" fill="#b4b4b4"/>
<circle cx="756" cy="453" r="6.300" fill="#b4b4b4"/>
<path d="M751.500 457.500 a6.300 6.300 0 0 1 9 -9z" fill="#626262"/>
<!-- posterize -->
<rect x="783.700" y="442.700" width="26" height="20.600" fill="#8a8a8a" stroke="#cdcdcd" stroke-width="1.400"/>
<rect x="783" y="441" width="27.400" height="1" fill="#2f2f2f"/>
<path d="M784.500 455 l12 -11.500 h7 l-19 18.500z" fill="#b8b8b8"/>
<path d="M796 462.500 l13 -12.500 v-5 l-19 17.500z" fill="#6e6e6e"/>
<path d="M803 462.500 l6 -6 v6z" fill="#bcbcbc"/>
<!-- threshold -->
<rect x="824.700" y="442.700" width="26" height="20.600" fill="#c2c2c2" stroke="#cdcdcd" stroke-width="1.400"/>
<rect x="824" y="441" width="27.400" height="1" fill="#2f2f2f"/>
<path d="M826.500 458 v-5 h5 v-3 h5 v-3 h6 v-2.500 h7 v4 h-5 v3 h-5 v3 h-6 v3.500z" fill="#3e3e3e"/>
<path d="M838 461.500 v-3 h5 v-2.500 h6.500 v5.500z" fill="#4a4a4a"/>
<!-- selective color -->
<rect x="865.700" y="442.700" width="26" height="20.600" fill="#8c8c8c" stroke="#cdcdcd" stroke-width="1.400"/>
<rect x="865" y="441" width="27.400" height="1" fill="#2f2f2f"/>
<path d="M866.400 443.400 l12.300 9.600 l-12.300 9.600z" fill="#6e6e6e"/><path d="M891 443.400 l-12.300 9.600 l12.300 9.600z" fill="#787878"/>
<path d="M866.400 443.400 h24.600 l-12.300 9.600z" fill="#b6b6b6"/><path d="M866.400 462.600 h24.600 l-12.300 -9.600z" fill="#909090"/>
<!-- gradient map -->
<rect x="907.200" y="442.700" width="25.500" height="20.600" fill="url(#gh)" stroke="#cdcdcd" stroke-width="1.400"/>
<rect x="906.500" y="441" width="27" height="1" fill="#2f2f2f"/>
</svg>
<!-- adjustments bottom -->
<div class="a" style="left:662px;top:479.500px;width:362px;height:1.500px;background:#5c5c5c;"></div>
<div class="a" style="left:662px;top:481px;width:362px;height:5px;background:#303030;"></div>
<!-- ===== LAYERS panel ===== -->
<div class="a" id="layp" style="left:662px;top:486px;width:362px;height:538px;background:#535353;"></div>


<!-- layers contents -->
<div class="a" style="left:662px;top:486px;width:362px;height:29px;background:linear-gradient(#3d3d3d,#363636);"></div>
<div class="a" style="left:736px;top:486px;width:162px;height:28px;background:linear-gradient(#434343,#3c3c3c);border-right:1px solid #2e2e2e;"></div>
<div class="a" style="left:831.500px;top:486px;width:1px;height:28px;background:#2e2e2e;"></div>
<div class="a" style="left:662px;top:486px;width:362px;height:1px;background:#4a4a4a;"></div>
<div class="a" style="left:736px;top:514px;width:288px;height:1.500px;background:#2b2b2b;"></div>
<div class="a" style="left:736px;top:515.500px;width:288px;height:1px;background:#606060;"></div>
<div class="a" style="left:662px;top:486px;width:74px;height:30px;background:#535353;border-top:1px solid #6c6c6c;border-right:1px solid #2e2e2e;box-sizing:border-box;"></div>
<div class="t tb" style="left:674px;top:494px;">Layers</div>
<div class="t tb dim" style="left:748px;top:494px;">Channels</div>
<div class="t tb dim" style="left:845px;top:494px;">Paths</div>
<svg style="left:996px;top:494px" width="26" height="14" viewBox="0 0 26 14"><path d="M1 3.200 h8 l-4 5.400z" fill="#d8d8d8"/><rect x="11" y="0" width="14" height="1.6" fill="#dcdcdc"/><rect x="11" y="3.5" width="14" height="1.6" fill="#dcdcdc"/><rect x="11" y="7" width="14" height="1.6" fill="#dcdcdc"/><rect x="11" y="10.500" width="14" height="1.600" fill="#dcdcdc"/></svg>
<!-- filter row -->
<div class="a" style="left:669.500px;top:524.500px;width:108px;height:27.500px;border:1px solid #2d2d2d;border-radius:4px;background:linear-gradient(#6d6d6d,#5a5a5a);box-shadow:0 1px 0 rgba(255,255,255,.12), inset 0 1px 0 rgba(255,255,255,.18);box-sizing:border-box;"></div>
<div class="t" style="left:705px;top:531px;">Kind</div>
<svg style="left:680px;top:529px" width="18" height="18" viewBox="0 0 18 18"><circle cx="10" cy="6.500" r="5" fill="none" stroke="#d0d0d0" stroke-width="1.800"/><path d="M6.500 10.500 L1.500 16" stroke="#d0d0d0" stroke-width="2.200" stroke-linecap="round"/></svg>
<svg style="left:761px;top:532px" width="10" height="14" viewBox="0 0 10 14"><path d="M5 0.300 L9.300 5.600 H0.700z M5 13.700 L9.300 8.400 H0.700z" fill="#e2e2e2"/></svg>
<svg style="left:0;top:0" width="1024" height="1024" viewBox="0 0 1024 1024">
<!-- pixel filter -->
<rect x="797.800" y="530" width="20.400" height="17" fill="#555" stroke="#c8c8c8" stroke-width="1.500"/>
<rect x="797" y="528.300" width="22" height="1" fill="#2f2f2f"/>
<path d="M800.500 544.500 v-3 l2.500 -3 l2 2 l1.500 -2 l2.500 3 l2 -1.500 l3.500 2 v2.500z" fill="#c0c0c0"/>
<path d="M812.500 533.500 v4 M810.500 535.500 h4" stroke="#c8c8c8" stroke-width="1.300"/>
<!-- adjustment filter -->
<circle cx="848.500" cy="537.500" r="8" fill="#5e5e5e" stroke="#c4c4c4" stroke-width="1.800"/>
<path d="M842.800 543.200 A8 8 0 0 1 854.200 531.800z" fill="#c4c4c4"/>
<rect x="842" y="528" width="13" height="1" fill="#2f2f2f" opacity=".6"/>
<!-- type filter -->
<path d="M880.500 530 H898 V535 H896.500 L895.500 532.300 H890.800 V543.800 L893.500 544.600 V546 H885 V544.600 L887.700 543.800 V532.300 H883 L882 535 H880.500z" fill="#d0d0d0"/>
<rect x="880.500" y="528.600" width="17.500" height="1" fill="#2f2f2f"/>
<!-- shape filter -->
<rect x="924.300" y="532.300" width="13.500" height="13.500" fill="none" stroke="#c8c8c8" stroke-width="1.500"/>
<g fill="#555" stroke="#d4d4d4" stroke-width="1.300"><rect x="922.200" y="530.200" width="4" height="4"/><rect x="935.800" y="530.200" width="4" height="4"/><rect x="922.200" y="543.800" width="4" height="4"/><rect x="935.800" y="543.800" width="4" height="4"/></g>
<rect x="921.500" y="528.600" width="19" height="1" fill="#2f2f2f" opacity=".6"/>
<!-- smart filter -->
<path d="M968.500 530 h8.500 l4.300 4.300 v13.200 h-12.800z" fill="#585858" stroke="#cfcfcf" stroke-width="1.500"/>
<path d="M977 530 v4.300 h4.300" fill="none" stroke="#cfcfcf" stroke-width="1.300"/>
<rect x="962.500" y="539.500" width="10.500" height="10" fill="#b8b8b8"/>
<rect x="968" y="528.400" width="9" height="1" fill="#2f2f2f" opacity=".7"/>
<!-- toggle -->
<rect x="1005" y="525" width="16" height="28" rx="1.500" fill="#3c3c3c" stroke="#666" stroke-width="1"/>
<rect x="1006.500" y="526.500" width="13" height="12" fill="url(#tog)"/>
<defs><linearGradient id="tog" x1="0" y1="0" x2="0" y2="1"><stop offset="0" stop-color="#9a9a9a"/><stop offset="1" stop-color="#6c6c6c"/></linearGradient></defs>
</svg>
<div class="a" style="left:662px;top:562px;width:362px;height:1.500px;background:#353535;"></div>
<div class="a" style="left:662px;top:563.500px;width:362px;height:1px;background:#616161;"></div>
<!-- blend row -->
<div class="a" style="left:669.500px;top:573px;width:190.500px;height:27px;border:1px solid #2d2d2d;border-radius:4px;background:linear-gradient(#6d6d6d,#5a5a5a);box-shadow:0 1px 0 rgba(255,255,255,.12), inset 0 1px 0 rgba(255,255,255,.18);box-sizing:border-box;"></div>
<div class="t" style="left:681px;top:579.500px;">Normal</div>
<svg style="left:843px;top:580px" width="10" height="14" viewBox="0 0 10 14"><path d="M5 0.300 L9.300 5.600 H0.700z M5 13.700 L9.300 8.400 H0.700z" fill="#e2e2e2"/></svg>
<div class="t" style="left:867.500px;top:580.500px;">Opacity:</div>
<div class="a" style="left:935.500px;top:574px;width:58px;height:26px;background:#3a3a3a;box-shadow:0 1px 0 #6b6b6b, inset 1px 1px 0 #303030;"></div>
<div class="a" style="left:993px;top:574px;width:27px;height:26px;background:linear-gradient(#727272,#606060);border-radius:0 4px 4px 0;box-shadow:0 1px 0 #6b6b6b, inset 0 1px 0 rgba(255,255,255,.15);border:1px solid #3a3a3a;border-left:none;box-sizing:border-box;"></div>
<div class="t" style="left:944px;top:580.500px;">100%</div>
<svg style="left:1001px;top:584px" width="11" height="7" viewBox="0 0 11 7"><path d="M0.500 0.500 h10 l-5 6z" fill="#e6e6e6"/></svg>
<div class="a" style="left:662px;top:610.500px;width:362px;height:1.500px;background:#353535;"></div>
<div class="a" style="left:662px;top:612px;width:362px;height:1px;background:#616161;"></div>
<!-- lock row -->
<div class="t" style="left:671px;top:629px;">Lock:</div>
<svg style="left:0;top:0" width="1024" height="1024" viewBox="0 0 1024 1024">
<!-- lock transparency -->
<rect x="722" y="626" width="19" height="18.500" fill="#8a8a8a"/>
<g fill="#6a6a6a"><rect x="723.500" y="627.500" width="5.300" height="5.200"/><rect x="734.200" y="627.500" width="5.300" height="5.200"/><rect x="728.800" y="632.700" width="5.400" height="5.200"/><rect x="723.500" y="637.900" width="5.300" height="5.200"/><rect x="734.200" y="637.900" width="5.300" height="5.200"/></g>
<!-- brush -->
<path d="M783.500 622 q1.500 1 0.500 3 l-12.500 15 l-3 -2.500 l13 -15 q1 -1 2 -0.500z" fill="#8c8c8c"/>
<path d="M768.500 637.500 l3 2.500 q-1 4.500 -7 4.500 h-8.500 q6 -1.500 7.500 -4.500 q1.500 -3 5 -2.500z" fill="#8c8c8c"/>
<!-- move -->
<g stroke="#c4c4c4" stroke-width="1.800" fill="none"><path d="M806.300 624.500 v18 M797.300 633.500 h18"/></g>
<g fill="#c4c4c4"><path d="M806.300 621.500 l4.500 5 h-9z M806.300 645.500 l4.500 -5 h-9z M794.800 633.500 l5 -4.500 v9z M817.800 633.500 l-5 -4.500 v9z"/></g>
<g fill="#535353"><rect x="805.300" y="629.500" width="2" height="3"/></g>
<!-- lock -->
<path d="M839.500 633 v-3 a5 5 0 0 1 10 0 v3" fill="none" stroke="#b8b8b8" stroke-width="2.400"/>
<rect x="836" y="632.500" width="17.500" height="12" rx="1" fill="#bdbdbd"/>
<rect x="843.500" y="636.500" width="2.500" height="4" fill="#3c3c3c"/>
</svg>
<div class="t" style="left:903px;top:628.500px;letter-spacing:.1px;">Fill:</div>
<div class="a" style="left:935.500px;top:621.500px;width:58px;height:26px;background:#3a3a3a;box-shadow:0 1px 0 #6b6b6b, inset 1px 1px 0 #303030;"></div>
<div class="a" style="left:993px;top:621.500px;width:27px;height:26px;background:linear-gradient(#727272,#606060);border-radius:0 4px 4px 0;box-shadow:0 1px 0 #6b6b6b, inset 0 1px 0 rgba(255,255,255,.15);border:1px solid #3a3a3a;border-left:none;box-sizing:border-box;"></div>
<div class="t" style="left:944px;top:628.500px;">100%</div>
<svg style="left:1001px;top:631.500px" width="11" height="7" viewBox="0 0 11 7"><path d="M0.500 0.500 h10 l-5 6z" fill="#e6e6e6"/></svg>
<!-- layer list -->
<div class="a" id="llist" style="left:662px;top:660px;width:362px;height:364px;overflow:hidden;">
<div class="a" style="left:-662px;top:-660px;width:1024px;height:1024px;">
<div class="a" style="left:662px;top:660px;width:340px;height:364px;background:#535353;"></div>
<div class="a" style="left:1002px;top:660px;width:22px;height:364px;background:linear-gradient(90deg,#3a3a3a,#464646 50%,#4a4a4a);"></div>
<div class="a" style="left:1008.500px;top:673px;width:13.500px;height:47px;border-radius:7px;background:linear-gradient(90deg,#959595,#828282 50%,#787878);"></div>
<div class="a" style="left:713.500px;top:660px;width:1.500px;height:364px;background:#3c3c3c;"></div>
<div class="a" style="left:662px;top:626.75px;width:340px;height:1.500px;background:#383838;"></div>
<div class="a" style="left:720.5px;top:633.75px;width:54px;height:54px;background:#1c1c1c;"></div><div class="a" style="left:722.500px;top:635.75px;width:50px;height:50px;background:repeating-conic-gradient(#fff 0% 25%,#cbcbcb 0% 50%) 0 0/14.300px 14.300px;"></div>
<div class="t" style="left:789.500px;top:656.8px;">27 line</div>
<div class="a" style="left:662px;top:693.25px;width:340px;height:1.500px;background:#383838;"></div>
<div class="t" style="left:789.500px;top:723.3px;">27 lower initial</div>
<div class="a" style="left:662px;top:759.75px;width:340px;height:1.500px;background:#383838;"></div>
<div class="a" style="left:720.5px;top:766.75px;width:54px;height:54px;background:#1c1c1c;"></div><div class="a" style="left:722.500px;top:768.75px;width:50px;height:50px;background:repeating-conic-gradient(#fff 0% 25%,#cbcbcb 0% 50%) 0 0/14.300px 14.300px;"></div><div class="a" style="left:767px;top:773.75px;width:3px;height:3.500px;background:#111;"></div>
<div class="t" style="left:789.500px;top:789.8px;">27 domino</div>
<div class="a" style="left:662px;top:826.25px;width:340px;height:1.500px;background:#383838;"></div>
<div class="t" style="left:789.500px;top:856.3px;">26 Ellison</div>
<div class="a" style="left:662px;top:892.75px;width:340px;height:1.500px;background:#383838;"></div>
<div class="a" style="left:720.5px;top:899.75px;width:54px;height:54px;background:#1c1c1c;"></div><div class="a" style="left:722.500px;top:901.75px;width:50px;height:50px;background:repeating-conic-gradient(#fff 0% 25%,#cbcbcb 0% 50%) 0 0/14.300px 14.300px;"></div>
<div class="t" style="left:789.500px;top:922.8px;">25 Top Design</div>
<div class="a" style="left:662px;top:959.25px;width:340px;height:1.500px;background:#383838;"></div>
<div class="t" style="left:789.500px;top:989.3px;">25 Top Name</div>
<svg style="left:0;top:0" width="1024" height="1024" viewBox="0 0 1024 1024"><g transform="translate(687.5,660.0)"><path d="M-9.800 0 C-6 -7.800 6 -7.800 9.800 0 C6 7.800 -6 7.800 -9.800 0z" fill="#484848" stroke="#aaaaaa" stroke-width="1.900"/><circle cx="0" cy="0" r="4.700" fill="#363636" stroke="#858585" stroke-width="1.600"/><rect x="0.500" y="-2.500" width="2" height="2" fill="#e0e0e0"/></g><g transform="translate(687.5,726.5)"><path d="M-9.800 0 C-6 -7.800 6 -7.800 9.800 0 C6 7.800 -6 7.800 -9.800 0z" fill="#484848" stroke="#aaaaaa" stroke-width="1.900"/><circle cx="0" cy="0" r="4.700" fill="#363636" stroke="#858585" stroke-width="1.600"/><rect x="0.500" y="-2.500" width="2" height="2" fill="#e0e0e0"/></g><g transform="translate(747,726.5)"><path d="M-13 -12.500 H13 V-6.500 H11 L10 -9.800 H2.300 V9.800 L6.500 10.800 V12.500 H-6.500 V10.800 L-2.300 9.800 V-9.800 H-10 L-11 -6.500 H-13z" fill="url(#gv)"/><rect x="-13" y="-13.800" width="26" height="1" fill="#2f2f2f"/></g><g transform="translate(687.5,793.0)"><path d="M-9.800 0 C-6 -7.800 6 -7.800 9.800 0 C6 7.800 -6 7.800 -9.800 0z" fill="#484848" stroke="#aaaaaa" stroke-width="1.900"/><circle cx="0" cy="0" r="4.700" fill="#363636" stroke="#858585" stroke-width="1.600"/><rect x="0.500" y="-2.500" width="2" height="2" fill="#e0e0e0"/></g><g transform="translate(687.5,859.5)"><path d="M-9.800 0 C-6 -7.800 6 -7.800 9.800 0 C6 7.800 -6 7.800 -9.800 0z" fill="#484848" stroke="#aaaaaa" stroke-width="1.900"/><circle cx="0" cy="0" r="4.700" fill="#363636" stroke="#858585" stroke-width="1.600"/><rect x="0.500" y="-2.500" width="2" height="2" fill="#e0e0e0"/></g><g transform="translate(747,859.5)"><path d="M-13 -12.500 H13 V-6.500 H11 L10 -9.800 H2.300 V9.800 L6.500 10.800 V12.500 H-6.500 V10.800 L-2.300 9.800 V-9.800 H-10 L-11 -6.500 H-13z" fill="url(#gv)"/><rect x="-13" y="-13.800" width="26" height="1" fill="#2f2f2f"/></g><g transform="translate(687.5,926.0)"><path d="M-9.800 0 C-6 -7.800 6 -7.800 9.800 0 C6 7.800 -6 7.800 -9.800 0z" fill="#484848" stroke="#aaaaaa" stroke-width="1.900"/><circle cx="0" cy="0" r="4.700" fill="#363636" stroke="#858585" stroke-width="1.600"/><rect x="0.500" y="-2.500" width="2" height="2" fill="#e0e0e0"/></g><g transform="translate(687.5,992.5)"><path d="M-9.800 0 C-6 -7.800 6 -7.800 9.800 0 C6 7.800 -6 7.800 -9.800 0z" fill="#484848" stroke="#aaaaaa" stroke-width="1.900"/><circle cx="0" cy="0" r="4.700" fill="#363636" stroke="#858585" stroke-width="1.600"/><rect x="0.500" y="-2.500" width="2" height="2" fill="#e0e0e0"/></g><g transform="translate(747,992.5)"><path d="M-13 -12.500 H13 V-6.500 H11 L10 -9.800 H2.300 V9.800 L6.500 10.800 V12.500 H-6.500 V10.800 L-2.300 9.800 V-9.800 H-10 L-11 -6.500 H-13z" fill="url(#gv)"/><rect x="-13" y="-13.800" width="26" height="1" fill="#2f2f2f"/></g></svg>
<div class="a" style="left:662px;top:660px;width:362px;height:1px;background:#333;"></div>
</div></div>
</body>
</html>
